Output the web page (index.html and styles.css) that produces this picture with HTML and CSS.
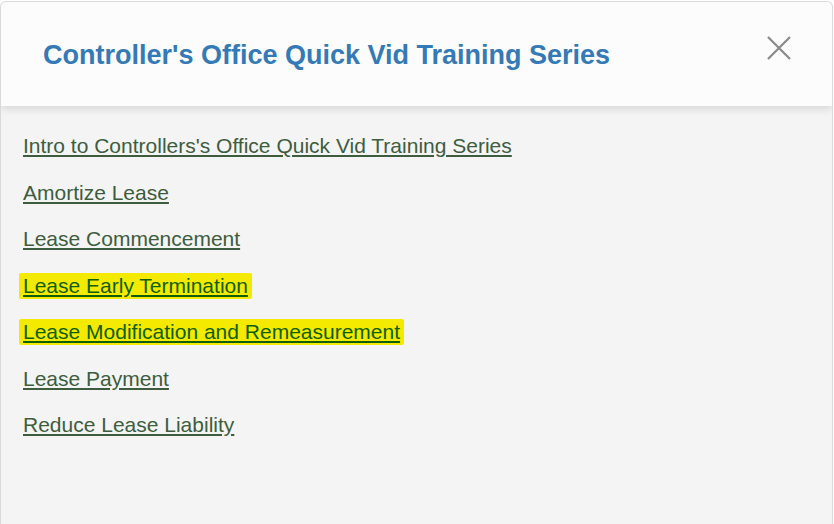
FILE: index.html
```html
<!DOCTYPE html>
<html>
<head>
<meta charset="utf-8">
<link rel="stylesheet" href="styles.css">
</head>
<body>
<div class="modal">
  <div class="modal-header">
    <h2 class="modal-title">Controller's Office Quick Vid Training Series</h2>
    <button class="close" aria-label="Close">
      <svg width="26" height="26" viewBox="0 0 26 26"><path d="M2 2 L24 24 M24 2 L2 24" stroke="#8a8a8a" stroke-width="2.2" fill="none"/></svg>
    </button>
  </div>
  <div class="modal-body">
    <a class="vid" href="#">Intro to Controllers's Office Quick Vid Training Series</a>
    <a class="vid" href="#">Amortize Lease</a>
    <a class="vid" href="#">Lease Commencement</a>
    <a class="vid hl" href="#">Lease Early Termination</a>
    <a class="vid hl" href="#">Lease Modification and Remeasurement</a>
    <a class="vid" href="#">Lease Payment</a>
    <a class="vid" href="#">Reduce Lease Liability</a>
  </div>
</div>
</body>
</html>
```
FILE: styles.css
```css
html, body {
  margin: 0;
  padding: 0;
  background: #ffffff;
  font-family: Arial, "Liberation Sans", sans-serif;
}
.modal {
  margin: 1px 1px 0 0;
  height: 523px;
  box-sizing: border-box;
  border: 1px solid #d9d9d9;
  border-bottom: none;
  border-radius: 6px 6px 0 0;
  background: #f4f4f4;
  display: flex;
  flex-direction: column;
  overflow: hidden;
}
.modal-header {
  height: 104px;
  flex: none;
  background: #fcfcfc;
  display: flex;
  align-items: center;
  justify-content: space-between;
  padding: 0 40px 0 42px;
  box-shadow: 0 3px 8px rgba(0, 0, 0, 0.12);
  position: relative;
  z-index: 1;
}
.modal-title {
  margin: 0;
  color: #337ab7;
  font-family: Arial, "Liberation Sans", sans-serif;
  font-size: 27px;
  font-weight: bold;
  padding-top: 2px;
}
.close {
  background: none;
  border: none;
  padding: 0;
  margin-top: -12px;
  display: flex;
  cursor: pointer;
}
.modal-body {
  display: flex;
  flex-direction: column;
  align-items: flex-start;
  padding: 28px 22px 0 22px;
  gap: 23.5px;
}
.vid {
  font-family: Arial, "Liberation Sans", sans-serif;
  font-size: 21px;
  line-height: 23px;
  color: #3e5c3e;
  text-decoration: underline;
  text-underline-offset: 2px;
}
.hl {
  color: #0f5f0a;
  background: #f4ea00;
  margin: -1px 0 -2px -4px;
  padding: 1px 4px 2px 4px;
  border-radius: 2px;
}
```
